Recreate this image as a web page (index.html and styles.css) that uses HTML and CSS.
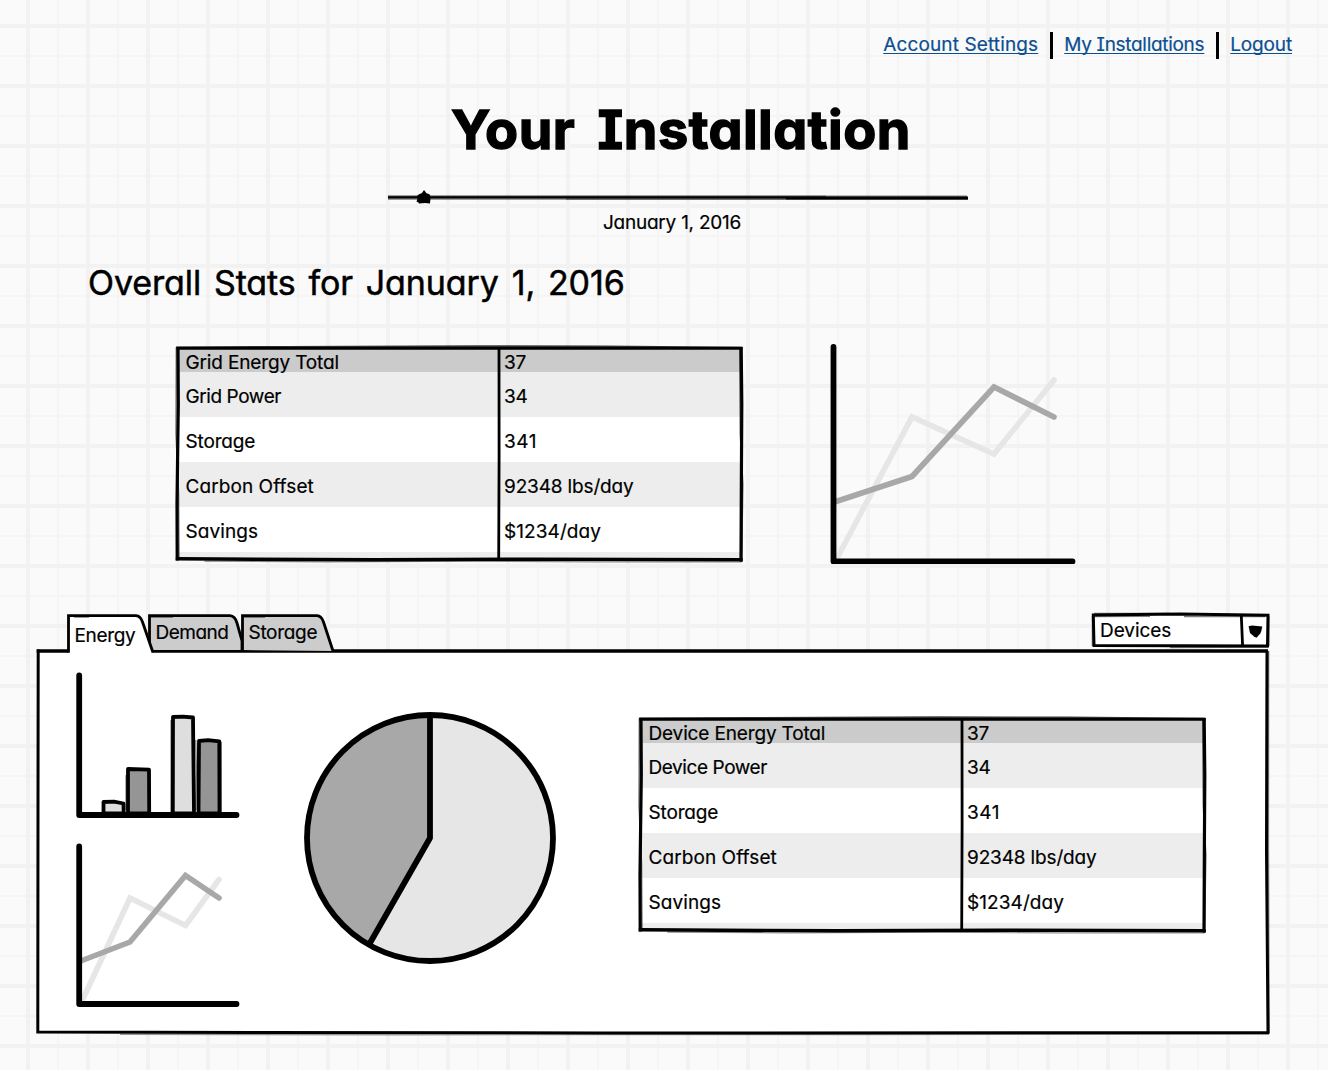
FILE: index.html
```html
<!DOCTYPE html>
<html lang="en">
<head>
<meta charset="utf-8">
<title>Your Installation</title>
<link rel="stylesheet" href="styles.css">
</head>
<body>
<svg width="0" height="0" class="defs" aria-hidden="true">
  <symbol id="table-frame" viewBox="0 0 570 220">
    <g fill="none" stroke="#000" stroke-linecap="square">
      <path d="M2 3.3L110 2.9L300 2.2L430 2.4L566 3.6" stroke-width="1.8" opacity=".75"/>
      <path d="M3 4.3H566" stroke-width="3"/>
      <path d="M3 5L3.3 60L2 160L2.2 215" stroke-width="3.2"/>
      <path d="M1.3 4L1 90L3.6 150L4 214" stroke-width="1.4" opacity=".55"/>
      <path d="M566.2 4.5L566.8 60L566.4 130L566 216" stroke-width="3.2"/>
      <path d="M564.8 6L565.3 90L567.8 140L566.6 217" stroke-width="1.5" opacity=".6"/>
      <path d="M2.5 214.8L200 215.8L360 215.2L566 215.8" stroke-width="3.4"/>
      <path d="M30 217.2L150 217.8L300 217.2L420 218L566 218" stroke-width="1.2" opacity=".45"/>
      <path d="M324 5L324.1 110L323.7 214" stroke-width="2.8"/>
    </g>
  </symbol>
</svg>

<nav class="nav">
  <a class="link-account" href="#">Account Settings</a>
  <i class="sep"></i>
  <a class="link-installs" href="#">My Installations</a>
  <i class="sep"></i>
  <a href="#">Logout</a>
</nav>

<main>
  <h1>Your Installation</h1>
  <svg class="slider" width="584" height="20" viewBox="0 0 584 20">
    <path d="M2 9.6H582" stroke="#000" stroke-width="2"/>
    <path d="M2 8.2H440" stroke="#000" stroke-width="1.6" opacity=".75"/>
    <path d="M440 8.3H581" stroke="#000" stroke-width="1.6" opacity=".5"/>
    <path d="M2 11H180" stroke="#000" stroke-width="1.6" opacity=".5"/>
    <path d="M180 11H400" stroke="#000" stroke-width="1.6" opacity=".75"/>
    <path d="M400 10.6H582" stroke="#000" stroke-width="2.2"/>
    <path d="M38 2L40.5 5.2L43.5 6.2L44.6 9L44 15.4L39 14.9L33 15.4L32 14L30.5 13.8L31.5 10.5L31 8L33 6.3L36 5Z"/>
  </svg>
  <p class="date">January 1, 2016</p>
  <h2>Overall Stats for January 1, 2016</h2>

  <section class="summary">
    <div class="grid-table">
      <div class="row head"><span>Grid Energy Total</span><span>37</span></div>
      <div class="row"><span class="tight">Grid Power</span><span>34</span></div>
      <div class="row"><span>Storage</span><span class="wide">341</span></div>
      <div class="row"><span class="loose">Carbon Offset</span><span>92348 lbs/day</span></div>
      <div class="row"><span class="loose">Savings</span><span class="loose">$1234/day</span></div>
      <svg class="frame"><use href="#table-frame"/></svg>
    </div>
    <svg class="trend" width="250" height="222" viewBox="829 342 250 222">
      <g fill="none" stroke-width="5.6" stroke-linecap="round">
        <path d="M836 560L912 417L994 454L1054 380" stroke="#e6e6e6"/>
        <path d="M836 501.5L912 476.5L994 387L1054 417" stroke="#a8a8a8"/>
        <path d="M833.5 347V561.5H1072.5" stroke="#000" stroke-width="5.8" stroke-linejoin="round"/>
      </g>
    </svg>
  </section>

  <div class="tabs">
    <div class="tab active">
      <svg viewBox="67 613 89 41" width="89" height="41"><path d="M68.5 652.5V615.7H136Q140.5 616 142.5 622L153 652.5" fill="#fff" stroke="#000" stroke-width="2.8"/><path d="M74 617.5H89" stroke="#999"/></svg>
      <span>Energy</span>
    </div>
    <div class="tab demand">
      <svg viewBox="148 613 96 41" width="96" height="41"><path d="M149.5 650V615.7H230Q235 616 237 623L242 641V650" fill="#ccc" stroke="#000" stroke-width="2.8"/><path d="M151 617.5H173" stroke="#777"/></svg>
      <span>Demand</span>
    </div>
    <div class="tab storage">
      <svg viewBox="241 613 94 41" width="94" height="41"><path d="M242.5 650V615.7H317Q321.5 616 323.5 622L333 651" fill="#ccc" stroke="#000" stroke-width="2.8"/><path d="M244 617.5H265" stroke="#777"/></svg>
      <span>Storage</span>
    </div>
    <div class="select">
      <svg viewBox="1091 612 180 37" width="180" height="37">
        <path d="M1093.3 615L1180 614L1268 615.3L1267.5 646L1094 645.5Z" fill="#fff" stroke="#000" stroke-width="3"/>
        <path d="M1095 616.5L1150 616.3M1184 616.5H1265M1094 613.5H1170M1170 647.7L1268 647" stroke="#000" stroke-width="1.3" opacity=".5"/>
        <path d="M1092.3 616V646M1269 616V646" stroke="#000" stroke-width="1.2" opacity=".5"/>
        <path d="M1241.3 615.5L1242.6 646" stroke="#000" stroke-width="2.8"/>
        <path d="M1248.6 626.2L1252 625.4L1262.3 626.5L1261.3 631L1260.3 633.5L1256.5 637.7L1254 636.5L1250 633Z"/>
      </svg>
      <span>Devices</span>
    </div>
  </div>

  <section class="panel">
    <svg class="outline" viewBox="36 649 1235 387" width="1235" height="387">
      <g fill="none" stroke="#000">
        <path d="M38.2 649.5L38 800L37.8 1032L600 1033L1268 1032.5L1266.5 850L1267 651" stroke-width="3"/>
        <path d="M36.7 651H69.9M152 651H1268" stroke-width="3.4"/>
        <path d="M1268.7 651L1268.5 840L1269.2 1033" stroke-width="1.2" opacity=".5"/>
        <path d="M120 1034.4L400 1034.8L860 1034.6L1269 1034.3" stroke-width="1.2" opacity=".4"/>
      </g>
    </svg>
    <div class="charts">
      <svg width="168" height="146" viewBox="75 672 168 146">
        <g stroke="#000" stroke-width="3.8" stroke-linejoin="round">
          <path d="M103.5 802L114 801.6L123.5 803.5L123.7 813.5H103.5Z" fill="#dedede"/>
          <path d="M128 769L149 769.7L149.2 813.5H128Z" fill="#959595"/>
          <path d="M173 717L183 716.6L193 717.5L194 813.5H172.8Z" fill="#dedede"/>
          <path d="M199 741L208 740.2L219.3 741.3L219.5 813.5H198.5Z" fill="#959595"/>
          <path d="M195.8 740L196.5 770L195.8 810M126 775V810M221.3 742V812M171 720V812" fill="none" stroke-width="1.2" opacity=".5"/>
        </g>
        <path d="M79.2 675.5V815H236.5" fill="none" stroke="#000" stroke-width="5.8" stroke-linecap="round" stroke-linejoin="round"/>
      </svg>
      <svg width="168" height="165" viewBox="75 843 168 165">
        <g fill="none" stroke-width="5.6" stroke-linecap="round">
          <path d="M82.5 1000L130 898L185.5 925.5L219 879.5" stroke="#e6e6e6"/>
          <path d="M82 960.5L130 942L185.5 875.5L219 898" stroke="#a8a8a8"/>
          <path d="M79.2 846.5V1004H236.5" stroke="#000" stroke-width="5.8" stroke-linejoin="round"/>
        </g>
      </svg>
    </div>
    <svg class="pie" width="254" height="254" viewBox="303 711 254 254">
      <circle cx="430" cy="838" r="123" fill="#e6e6e6"/>
      <path d="M430 838V715A123 123 0 0 0 369.2 944.9Z" fill="#a8a8a8"/>
      <g fill="none" stroke="#000" stroke-width="5.8" stroke-linejoin="round">
        <circle cx="430" cy="838" r="123"/>
        <path d="M430 715V838L370 943"/>
      </g>
    </svg>
    <div class="grid-table">
      <div class="row head"><span>Device Energy Total</span><span>37</span></div>
      <div class="row"><span class="tight">Device Power</span><span>34</span></div>
      <div class="row"><span>Storage</span><span class="wide">341</span></div>
      <div class="row"><span class="loose">Carbon Offset</span><span>92348 lbs/day</span></div>
      <div class="row"><span class="loose">Savings</span><span class="loose">$1234/day</span></div>
      <svg class="frame"><use href="#table-frame"/></svg>
    </div>
  </section>
</main>
</body>
</html>
```
FILE: styles.css
```css
* { box-sizing: border-box; }

body {
  margin: 0;
  height: 1070px;
  overflow: hidden;
  color: #000;
  font: 400 19px/24px Inter, sans-serif;
  font-feature-settings: "cv11", "cv08";
  letter-spacing: -0.15px;
  -webkit-text-stroke: 0.2px currentColor;
  background-color: #fafafa;
  background-image:
    linear-gradient(90deg, #f2f2f2 4px, transparent 4px),
    linear-gradient(#f2f2f2 4px, transparent 4px),
    linear-gradient(90deg, #f5f5f5 2px, transparent 2px),
    linear-gradient(#f5f5f5 2px, transparent 2px);
  background-size: 60px 60px;
  background-position: 26px 0, 0 24px, 57px 0, 0 55px;
}

h1, h2, p { margin: 0; }
svg { display: block; flex: none; }
.defs { position: absolute; }

.nav {
  display: flex;
  justify-content: flex-end;
  gap: 11.5px;
  height: 60px;
  padding: 33px 36px 0 0;
}
.nav a { color: #0b4f91; -webkit-text-stroke-color: #0b4f91; text-decoration-thickness: 1.3px; text-underline-offset: 1.5px; text-decoration-skip-ink: none; }
.nav .link-account { letter-spacing: 0.12px; }
.nav .link-installs { letter-spacing: -0.3px; }
.sep { width: 3px; height: 27px; margin-top: -1px; background: #000; }

h1 {
  margin: 35px 0 0 451px;
  font-size: 54px;
  line-height: 69px;
  font-weight: 700;
  letter-spacing: 0.5px;
  word-spacing: 9px;
  -webkit-text-stroke: 1.4px #000;
}
.slider { margin: 24px 0 0 386px; }
.date { margin: 3px 0 0 603px; letter-spacing: -0.24px; }
h2 {
  margin: 26px 0 0 88px;
  font-size: 34px;
  line-height: 44px;
  font-weight: 400;
  letter-spacing: -0.1px;
  word-spacing: 3.4px;
  -webkit-text-stroke: 0.5px #000;
}

.summary { display: flex; gap: 84px; margin: 37px 0 0 175px; height: 222px; }
.summary .grid-table { margin-top: 2px; }

.grid-table { position: relative; flex: none; width: 570px; height: 220px; padding: 3px 3px 0; }
.row { display: grid; grid-template-columns: 322px 241px; width: 563px; height: 45px; line-height: 48px; background: #fff; }
.row:nth-child(even) { background: #ededed; }
.row.head { height: 25.4px; line-height: 29px; background: #cbcbcb; }
.row span { padding-left: 7.5px; position: relative; top: 1px; }
.row span + span { padding-left: 4px; }
.row:nth-child(5) { height: 51px; background: linear-gradient(#fff 45px, #ededed 45px); }
.row .tight { letter-spacing: -0.42px; }
.row .loose { letter-spacing: 0.08px; }
.row .wide { letter-spacing: 0.6px; }
.frame { position: absolute; inset: 0; width: 570px; height: 220px; }

.tabs { display: flex; position: relative; z-index: 1; height: 37px; margin: 48px 0 0 67px; }
.tab { position: relative; height: 37px; }
.tab svg { position: absolute; left: 0; top: 1px; }
.tab span, .select span { position: relative; }
.active { z-index: 2; width: 81px; padding: 12px 0 0 7.5px; letter-spacing: -0.35px; }
.demand { width: 93px; padding: 9px 0 0 7.5px; letter-spacing: -0.5px; }
.storage { width: 94px; padding: 9px 0 0 7.5px; letter-spacing: -0.3px; }
.select { width: 180px; margin-left: 756px; padding: 7px 0 0 9px; position: relative; letter-spacing: -0.05px; }
.select svg { position: absolute; left: 0; top: 0; }

.panel { position: relative; display: flex; width: 1235px; height: 387px; margin-left: 36px; padding: 23px 0 0 39px; }
.panel::before { content: ""; position: absolute; inset: 2px 4px 3px 3px; background: #fff; }
.panel > * { position: relative; }
.panel .outline { position: absolute; left: 0; top: 0; }
.charts { display: flex; flex-direction: column; gap: 25px; }
.pie { margin: 39px 0 0 60px; }
.panel .grid-table { margin: 43px 0 0 81px; }
```
